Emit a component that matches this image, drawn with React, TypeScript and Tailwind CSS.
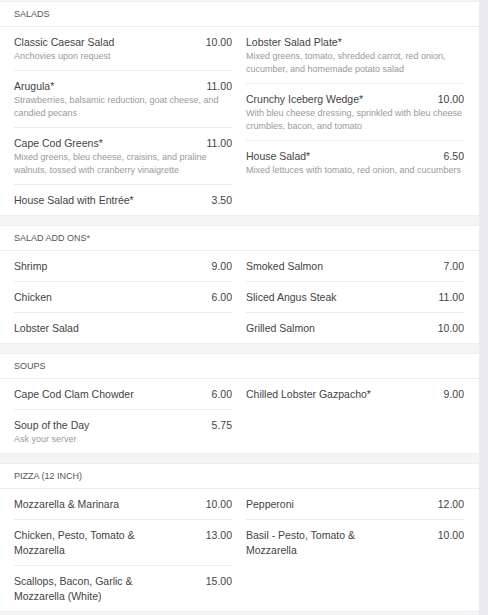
type Item = { name: string; price?: string; desc?: string };
type Section = { title: string; left: Item[]; right: Item[] };

const sections: Section[] = [
  {
    title: "SALADS",
    left: [
      { name: "Classic Caesar Salad", price: "10.00", desc: "Anchovies upon request" },
      { name: "Arugula*", price: "11.00", desc: "Strawberries, balsamic reduction, goat cheese, and candied pecans" },
      { name: "Cape Cod Greens*", price: "11.00", desc: "Mixed greens, bleu cheese, craisins, and praline walnuts, tossed with cranberry vinaigrette" },
      { name: "House Salad with Entrée*", price: "3.50" },
    ],
    right: [
      { name: "Lobster Salad Plate*", desc: "Mixed greens, tomato, shredded carrot, red onion, cucumber, and homemade potato salad" },
      { name: "Crunchy Iceberg Wedge*", price: "10.00", desc: "With bleu cheese dressing, sprinkled with bleu cheese crumbles, bacon, and tomato" },
      { name: "House Salad*", price: "6.50", desc: "Mixed lettuces with tomato, red onion, and cucumbers" },
    ],
  },
  {
    title: "SALAD ADD ONS*",
    left: [
      { name: "Shrimp", price: "9.00" },
      { name: "Chicken", price: "6.00" },
      { name: "Lobster Salad" },
    ],
    right: [
      { name: "Smoked Salmon", price: "7.00" },
      { name: "Sliced Angus Steak", price: "11.00" },
      { name: "Grilled Salmon", price: "10.00" },
    ],
  },
  {
    title: "SOUPS",
    left: [
      { name: "Cape Cod Clam Chowder", price: "6.00" },
      { name: "Soup of the Day", price: "5.75", desc: "Ask your server" },
    ],
    right: [{ name: "Chilled Lobster Gazpacho*", price: "9.00" }],
  },
  {
    title: "PIZZA (12 INCH)",
    left: [
      { name: "Mozzarella & Marinara", price: "10.00" },
      { name: "Chicken, Pesto, Tomato & Mozzarella", price: "13.00" },
      { name: "Scallops, Bacon, Garlic & Mozzarella (White)", price: "15.00" },
    ],
    right: [
      { name: "Pepperoni", price: "12.00" },
      { name: "Basil - Pesto, Tomato & Mozzarella", price: "10.00" },
    ],
  },
];

const MenuItem = ({ item }: { item: Item }) => (
  <div className="pt-[8px] pb-[7px] border-b border-[#ececec] last:border-b-0">
    <div className="flex justify-between items-start text-[10.5px] leading-[15px] text-[#444]">
      <span className="max-w-[150px]">{item.name}</span>
      {item.price && <span>{item.price}</span>}
    </div>
    {item.desc && (
      <div className="text-[9px] leading-[13px] text-[#9a9a9a]">{item.desc}</div>
    )}
  </div>
);

const MenuSection = ({ section }: { section: Section }) => (
  <div className="bg-white border-y border-[#eeeef0]">
    <div className="h-[25px] pt-[1px] flex items-center px-[14px] border-b border-[#ececec] text-[9px] text-[#555]">
      {section.title}
    </div>
    <div className="grid grid-cols-2 gap-x-[14px] pl-[14px] pr-[15px]">
      <div className="flex flex-col">
        {section.left.map((it) => (
          <MenuItem key={it.name} item={it} />
        ))}
      </div>
      <div className="flex flex-col">
        {section.right.map((it) => (
          <MenuItem key={it.name} item={it} />
        ))}
      </div>
    </div>
  </div>
);

export default function App() {
  return (
    <div
      className="w-[488px] h-[615px] overflow-hidden bg-[#f5f5f7] flex"
      style={{ fontFamily: '"Liberation Sans", Arial, sans-serif' }}
    >
      <div className="w-[479px] flex flex-col gap-[9px] pt-[1px]">
        {sections.map((s) => (
          <MenuSection key={s.title} section={s} />
        ))}
      </div>
      <div className="flex-1 bg-[#ebebf0]" />
    </div>
  );
}
